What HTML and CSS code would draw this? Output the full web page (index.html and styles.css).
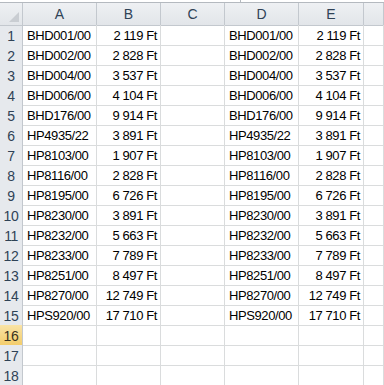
FILE: index.html
```html
<!DOCTYPE html>
<html lang="hu">
<head>
    <meta charset="UTF-8">
    <meta name="viewport" content="width=device-width, initial-scale=1.0">
    <title>Munka1</title>
    <link rel="stylesheet" href="styles.css">
</head>
<body>
    <div class="sheet">
        <div class="formula-edge"><span class="edge-split"></span></div>

        <div class="row col-heads">
            <div class="corner"><span class="select-all"></span></div>
            <div class="col-head">A</div>
            <div class="col-head">B</div>
            <div class="col-head">C</div>
            <div class="col-head">D</div>
            <div class="col-head">E</div>
            <div class="col-head"></div>
        </div>

        <div class="row"><div class="row-head">1</div><div class="cell">BHD001/00</div><div class="cell num">2 119 Ft</div><div class="cell"></div><div class="cell">BHD001/00</div><div class="cell num">2 119 Ft</div><div class="cell"></div></div>
        <div class="row"><div class="row-head">2</div><div class="cell">BHD002/00</div><div class="cell num">2 828 Ft</div><div class="cell"></div><div class="cell">BHD002/00</div><div class="cell num">2 828 Ft</div><div class="cell"></div></div>
        <div class="row"><div class="row-head">3</div><div class="cell">BHD004/00</div><div class="cell num">3 537 Ft</div><div class="cell"></div><div class="cell">BHD004/00</div><div class="cell num">3 537 Ft</div><div class="cell"></div></div>
        <div class="row"><div class="row-head">4</div><div class="cell">BHD006/00</div><div class="cell num">4 104 Ft</div><div class="cell"></div><div class="cell">BHD006/00</div><div class="cell num">4 104 Ft</div><div class="cell"></div></div>
        <div class="row"><div class="row-head">5</div><div class="cell">BHD176/00</div><div class="cell num">9 914 Ft</div><div class="cell"></div><div class="cell">BHD176/00</div><div class="cell num">9 914 Ft</div><div class="cell"></div></div>
        <div class="row"><div class="row-head">6</div><div class="cell">HP4935/22</div><div class="cell num">3 891 Ft</div><div class="cell"></div><div class="cell">HP4935/22</div><div class="cell num">3 891 Ft</div><div class="cell"></div></div>
        <div class="row"><div class="row-head">7</div><div class="cell">HP8103/00</div><div class="cell num">1 907 Ft</div><div class="cell"></div><div class="cell">HP8103/00</div><div class="cell num">1 907 Ft</div><div class="cell"></div></div>
        <div class="row"><div class="row-head">8</div><div class="cell">HP8116/00</div><div class="cell num">2 828 Ft</div><div class="cell"></div><div class="cell">HP8116/00</div><div class="cell num">2 828 Ft</div><div class="cell"></div></div>
        <div class="row"><div class="row-head">9</div><div class="cell">HP8195/00</div><div class="cell num">6 726 Ft</div><div class="cell"></div><div class="cell">HP8195/00</div><div class="cell num">6 726 Ft</div><div class="cell"></div></div>
        <div class="row"><div class="row-head">10</div><div class="cell">HP8230/00</div><div class="cell num">3 891 Ft</div><div class="cell"></div><div class="cell">HP8230/00</div><div class="cell num">3 891 Ft</div><div class="cell"></div></div>
        <div class="row"><div class="row-head">11</div><div class="cell">HP8232/00</div><div class="cell num">5 663 Ft</div><div class="cell"></div><div class="cell">HP8232/00</div><div class="cell num">5 663 Ft</div><div class="cell"></div></div>
        <div class="row"><div class="row-head">12</div><div class="cell">HP8233/00</div><div class="cell num">7 789 Ft</div><div class="cell"></div><div class="cell">HP8233/00</div><div class="cell num">7 789 Ft</div><div class="cell"></div></div>
        <div class="row"><div class="row-head">13</div><div class="cell">HP8251/00</div><div class="cell num">8 497 Ft</div><div class="cell"></div><div class="cell">HP8251/00</div><div class="cell num">8 497 Ft</div><div class="cell"></div></div>
        <div class="row"><div class="row-head">14</div><div class="cell">HP8270/00</div><div class="cell num">12 749 Ft</div><div class="cell"></div><div class="cell">HP8270/00</div><div class="cell num">12 749 Ft</div><div class="cell"></div></div>
        <div class="row"><div class="row-head">15</div><div class="cell">HPS920/00</div><div class="cell num">17 710 Ft</div><div class="cell"></div><div class="cell">HPS920/00</div><div class="cell num">17 710 Ft</div><div class="cell"></div></div>
        <div class="row"><div class="row-head active">16</div><div class="cell"></div><div class="cell"></div><div class="cell"></div><div class="cell"></div><div class="cell"></div><div class="cell"></div></div>
        <div class="row"><div class="row-head">17</div><div class="cell"></div><div class="cell"></div><div class="cell"></div><div class="cell"></div><div class="cell"></div><div class="cell"></div></div>
        <div class="row"><div class="row-head">18</div><div class="cell"></div><div class="cell"></div><div class="cell"></div><div class="cell"></div><div class="cell"></div><div class="cell"></div></div>
    </div>
</body>
</html>
```

FILE: styles.css
```css
* {
    margin: 0;
    padding: 0;
    box-sizing: border-box;
}

body {
    font-family: 'Liberation Sans', Arial, sans-serif;
    font-size: 13px;
    background: white;
    color: #000;
    overflow: hidden;
}

.sheet {
    width: 384px;
}

/* bottom edge of the formula bar above the grid */
.formula-edge {
    height: 3px;
    background: white;
    border-bottom: 1px solid #b4b9bf;
    position: relative;
}

.edge-split {
    position: absolute;
    left: 240px;
    top: 0;
    width: 1px;
    height: 3px;
    background: #b4b9bf;
}

.row {
    display: grid;
    grid-template-columns: 23px 74px 64px 64px 74px 65px 1fr;
    height: 20px;
}

.col-heads {
    height: 22px;
}

.corner,
.col-head,
.row-head {
    background: linear-gradient(#eef0f3, #e2e5e9);
    border-right: 1px solid #c3c8ce;
    border-bottom: 1px solid #c3c8ce;
    color: #2f4256;
    text-align: center;
}

.corner {
    position: relative;
}

/* little triangle of the select-all button */
.select-all {
    position: absolute;
    right: 3px;
    bottom: 3px;
    width: 0;
    height: 0;
    border-left: 10px solid transparent;
    border-bottom: 10px solid #c9cdd2;
}

.col-head {
    font-size: 14px;
    line-height: 22px;
}

.row-head {
    background: #e6e9ed;
    font-size: 14px;
    padding-top: 2px;
    line-height: 18px;
    letter-spacing: -0.4px;
}

.row-head.active {
    background: linear-gradient(#f9e3a6, #f3cd6c);
    border-bottom-color: #e3a63d;
    color: #3a3320;
}

.cell {
    border-right: 1px solid #dadcdd;
    border-bottom: 1px solid #dadcdd;
    padding: 2px 3px 0 4px;
    line-height: 18px;
    letter-spacing: -0.4px;
    white-space: nowrap;
    overflow: hidden;
}

.cell.num {
    text-align: right;
}
```
